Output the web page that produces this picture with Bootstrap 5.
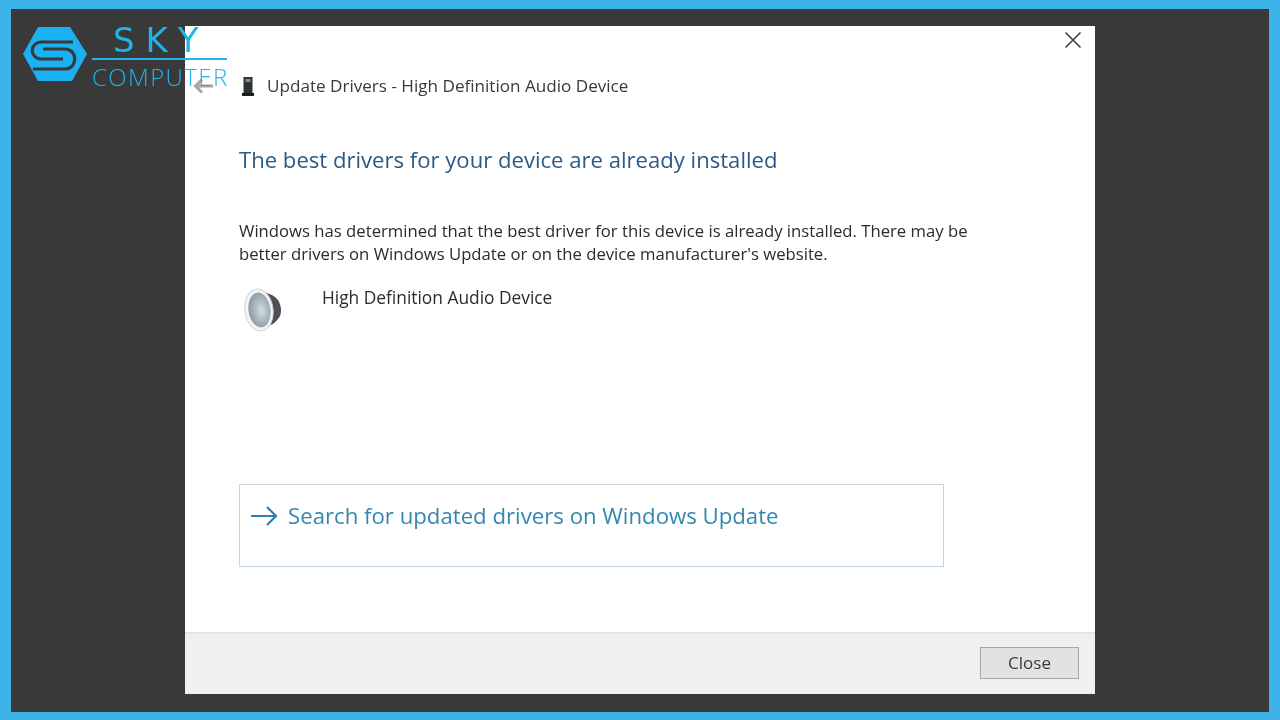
<!DOCTYPE html>
<html lang="en">
<head>
<meta charset="utf-8">
<title>Update Drivers</title>
<link href="https://cdn.jsdelivr.net/npm/bootstrap@5.3.0/dist/css/bootstrap.min.css" rel="stylesheet">
<style>
html,body{height:720px;overflow:hidden}
body{background:#3db3e9;font-family:"Open Sans","Noto Sans",sans-serif}
.frame-dark{position:relative;margin:9px 11px 8px 11px;height:703px;background:#3a3939;border-top:4px solid #3b3a44;padding-top:13px}
.dlg{width:910px;height:668px;background:#fff;color:#2b2b2b;filter:blur(.35px)}
.dlg-body{height:606px;padding:0 0 0 54px}
.xbtn{height:30px;padding:0 13px 0 0}
.xbtn svg{margin-top:5px}
.titlebar{height:30px;margin-top:15px;font-size:17.1px;color:#3a3a3a;margin-left:-54px;padding-left:8px}
.back-ic{margin-right:28px}
.chip-ic{margin-right:12px}
.headline{font-size:22.1px;color:#2c5a86;margin:43px 0 0 0;line-height:30px;font-weight:400}
.msg{font-size:16.7px;line-height:23px;margin:45px 0 0 0;color:#2b2b2b;width:745px}
.devrow{margin-top:21px;height:60px}
.spk{margin:1px 40px 0 4px}
.devname{font-size:17.35px;line-height:23px;color:#2b2b2b}
.cmd{margin-top:138px;width:705px;height:83px;border:1px solid #c5d6e2;border-bottom-color:#bcd0de;padding:13px 0 0 10px;gap:10px;color:#3487b0;font-size:22.2px;line-height:36px}
.dlg-foot{height:62px;background:#f0f0f0;border-top:2px solid #e3e3e3;padding:0 16px 0 0}
.closebtn{width:99px;height:32px;padding:0;border:1px solid #a6a6a6;border-radius:0;background:#e2e2e2;color:#3a3a3a;font-size:17px;line-height:28px;margin-top:13px}
.logo-box{position:absolute;left:12px;top:13px;width:210px;height:66px;filter:blur(.3px)}
.sky{position:absolute;left:90px;top:-6px;font-family:"DejaVu Sans",sans-serif;font-size:34px;line-height:40px;letter-spacing:11px;color:#1fb4ea}
.rule{position:absolute;left:69px;top:32px;width:135px;height:2px;background:#1fb4ea}
.comp{position:absolute;left:69px;top:37px;font-size:24px;font-weight:300;line-height:28px;letter-spacing:1.4px;color:#1fb4ea}
</style>
</head>
<body>
<div class="frame-dark d-flex justify-content-center align-items-start">
  <div class="dlg d-flex flex-column">
    <div class="dlg-body">
      <div class="xbtn d-flex justify-content-end">
        <svg width="18" height="18" viewBox="0 0 18 18"><path d="M1.5 1.5 16.500 16.500M16.500 1.500 1.500 16.500" stroke="#444" stroke-width="1.7" fill="none"/></svg>
      </div>
      <div class="titlebar d-flex align-items-center">
        <svg class="back-ic" width="20" height="16" viewBox="0 0 20 16"><path d="M9 1.500 2.500 8 9 14.500M3 8h17" stroke="#a9a6a3" stroke-width="3" fill="none"/></svg>
        <svg class="chip-ic" width="14" height="21" viewBox="0 0 14 21"><rect x="2.500" y="1" width="9" height="16" fill="#2e3436"/><rect x="4.500" y="3" width="5" height="3" fill="#7d8a8e"/><rect x="1" y="17" width="12" height="3" fill="#1c1f20"/></svg>
        <span>Update Drivers - High Definition Audio Device</span>
      </div>
      <h1 class="headline">The best drivers for your device are already installed</h1>
      <p class="msg">Windows has determined that the best driver for this device is already installed. There may be better drivers on Windows Update or on the device manufacturer's website.</p>
      <div class="devrow d-flex align-items-start">
        <svg class="spk" width="39" height="46" viewBox="0 0 39 46">
          <defs><radialGradient id="cone" cx="58%" cy="52%" r="60%"><stop offset="0" stop-color="#d5dfe3"/><stop offset=".45" stop-color="#aebcc4"/><stop offset="1" stop-color="#8b979e"/></radialGradient></defs>
          <path d="M13 5C22 4 31 8 35 13c4 6 4 15 0 19-4 6-12 9-20 8z" fill="#4d5155"/>
          <ellipse cx="16" cy="23" rx="14" ry="21" transform="rotate(-8 16 23)" fill="#f4f5f6" stroke="#cdd2d5"/>
          <ellipse cx="16.500" cy="23" rx="11" ry="17.500" transform="rotate(-8 16.500 23)" fill="url(#cone)"/>
        </svg>
        <span class="devname">High Definition Audio Device</span>
      </div>
      <div class="cmd d-flex align-items-start">
        <svg width="28" height="36" viewBox="0 0 28 36"><path d="M17 9l9 9-9 9M1 18h24" stroke="#2f7fb0" stroke-width="2.200" fill="none"/></svg>
        <span>Search for updated drivers on Windows Update</span>
      </div>
    </div>
    <div class="dlg-foot d-flex justify-content-end align-items-start">
      <button type="button" class="btn closebtn">Close</button>
    </div>
  </div>
  <div class="logo-box">
    <svg width="66" height="58" viewBox="0 0 66 58" class="d-block">
      <path d="M15 1h32l17 27-15 27H15L0 28z" fill="#1ab0f2"/>
      <path d="M50 16H19C6 16 6 33 19 33H40M10 43H42C55 43 55 23 42 23H20" stroke="#3a3939" stroke-width="3.200" fill="none"/>
    </svg>
    <span class="sky">SKY</span>
    <span class="rule"></span>
    <span class="comp">COMPUTER</span>
  </div>
</div>
</body>
</html>
